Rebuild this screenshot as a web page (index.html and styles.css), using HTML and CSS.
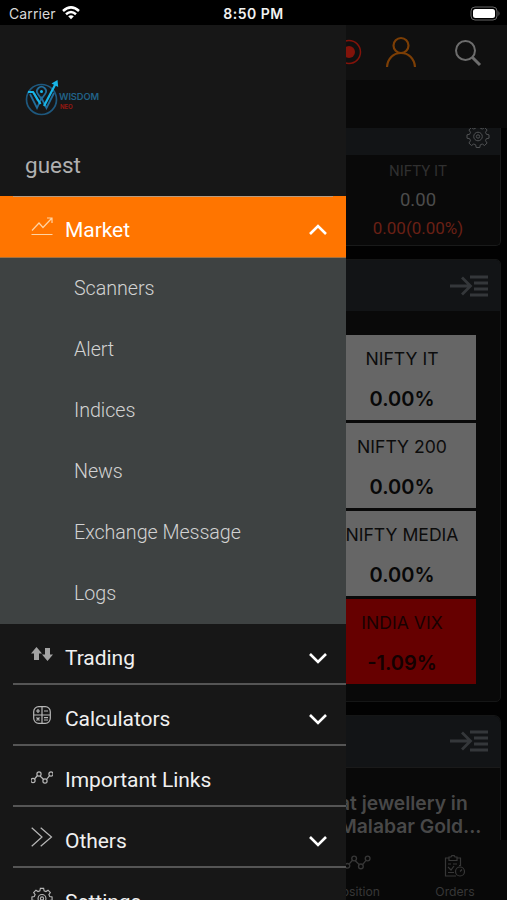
FILE: index.html
```html
<!DOCTYPE html>
<html lang="en">
<head>
<meta charset="utf-8">
<title>Wisdom Neo</title>
<link rel="stylesheet" href="styles.css">
</head>
<body>
<svg class="defs" width="0" height="0">
  <symbol id="gear" viewBox="0 0 24 24"><path d="M10.2 1.5h3.6l.5 2.7 2 .8 2.3-1.5 2.5 2.5-1.6 2.3.9 2 2.6.5v3.4l-2.7.5-.8 2 1.6 2.3-2.5 2.5-2.3-1.5-2 .8-.5 2.7h-3.6l-.5-2.7-2-.8L5.400 21.500 2.900 19l1.600-2.300-.8-2-2.700-.5v-3.400l2.600-.5.900-2L2.900 6l2.500-2.500L7.700 5l2-.8z"/><circle cx="12" cy="12.500" r="4.300"/><circle cx="12" cy="12.500" r="1.700"/></symbol>
  <symbol id="into" viewBox="0 0 40 22"><path d="M1 11h20M13 2.500l8.500 8.500-8.500 8.500M21 2h18M25 8h14M25 14h14M21 20h18"/></symbol>
  <symbol id="nodes" viewBox="0 0 24 14"><circle cx="3" cy="9.500" r="2.100"/><circle cx="9" cy="3" r="2.100"/><circle cx="15" cy="10" r="2.100"/><circle cx="21" cy="3" r="2.100"/><path d="M4.500 8l3-3.500M10 5l3.700 3.500M16.500 8.500L19.600 4.600"/></symbol>
  <symbol id="down" viewBox="0 0 20 12"><path d="M2 2l8 8 8-8"/></symbol>
</svg>
<div class="phone">
  <header class="status">
    <div class="carrier">Carrier
      <svg class="wifi" width="18" height="14" viewBox="0 0 18 14"><path d="M1 5Q9-2.200 17 5M4 8.200Q9 3.700 14 8.200"/><path class="dot" d="M6.200 10.300Q9 8.200 11.800 10.300L9 13.300z"/></svg>
    </div>
    <div class="time">8:50 PM</div>
    <svg class="battery" width="31" height="15" viewBox="0 0 31 15"><rect class="shell" x="1" y="1" width="26" height="13" rx="4"/><rect class="charge" x="3" y="3" width="22" height="9" rx="2.500"/><path class="cap" d="M28.500 5q2 2.500 0 5z"/></svg>
  </header>

  <main class="page">
    <div class="toolbar">
      <svg class="record" width="26" height="26" viewBox="0 0 26 26"><circle cx="13" cy="13" r="11.500"/><circle class="core" cx="13" cy="13" r="6"/></svg>
      <svg class="person" width="32" height="32" viewBox="0 0 32 32"><circle cx="16" cy="9.500" r="7.500"/><path d="M2 31c.7-8.500 6.500-14 14-14s13.300 5.500 14 14"/></svg>
      <svg class="search" width="28" height="28" viewBox="0 0 28 28"><circle cx="11.500" cy="11.500" r="9.500"/><path d="M18.500 18.500l7.500 7.500"/></svg>
    </div>
    <section class="ticker">
      <div class="ticker-bar"><svg class="gear" width="24" height="24"><use href="#gear"/></svg></div>
      <div class="quote"><span class="q-name">NIFTY IT</span><span class="q-price">0.00</span><span class="q-change">0.00(0.00%)</span></div>
    </section>
    <section class="card heat">
      <div class="card-head"><svg class="into" width="40" height="22"><use href="#into"/></svg></div>
      <div class="tiles">
        <div class="tile"><span>NIFTY IT</span><b>0.00%</b></div>
        <div class="tile"><span>NIFTY 200</span><b>0.00%</b></div>
        <div class="tile"><span>NIFTY MEDIA</span><b>0.00%</b></div>
        <div class="tile loss"><span>INDIA VIX</span><b>-1.09%</b></div>
      </div>
    </section>
    <section class="card news">
      <div class="card-head"><svg class="into" width="40" height="22"><use href="#into"/></svg></div>
      <div class="headline"><p>at jewellery in</p><p>Malabar Gold...</p></div>
    </section>
    <nav class="tabs">
      <div class="tab"><svg width="27" height="16"><use href="#nodes"/></svg><span>Position</span></div>
      <div class="tab"><svg width="22" height="23" viewBox="0 0 22 23"><path d="M5 3H1.500v18H12M13 3h3.500v8M5 2h2l.8-1.300h2.500L11 2h2v3.500H5zM4 9h3M9 9h4M4 12l3 3 3-4M4 17.500h6"/><circle cx="16" cy="16.500" r="4.500"/><path d="M16 16.500l2-2M15 10.500h2"/></svg><span>Orders</span></div>
    </nav>
  </main>

  <aside class="drawer">
    <div class="profile">
      <div class="brand">
        <svg width="34" height="37" viewBox="0 0 34 37"><circle class="ring" cx="16.500" cy="20.500" r="15"/><path class="w-dark" d="M5 15l7 14 4.500-10 5 10 7.500-15M9 14l4 8"/><path class="w-dark" d="M16.500 20l-3.600-5a4.500 4.500 0 1 1 7.200 0z"/><path class="w-light" d="M3 13h5l7.500 12M19 27L30.500 5"/><path class="tip" d="M26.500 4.500L32.500 1l.7 7z"/><circle class="tip" cx="16.500" cy="12.500" r="1.500"/></svg>
        <div class="brand-name"><span>WISDOM</span><em>NEO</em></div>
      </div>
      <div class="user">guest</div>
    </div>
    <div class="item active">
      <svg class="icon" width="22" height="20" viewBox="0 0 22 20"><path d="M.5 18.500h21M1 14.500L8 7l4 4.500 8.500-9M16 2h5v5"/></svg>
      <span>Market</span><svg class="chevron up" width="20" height="12"><use href="#down"/></svg>
    </div>
    <div class="submenu">
      <div>Scanners</div><div>Alert</div><div>Indices</div><div>News</div><div>Exchange Message</div><div>Logs</div>
    </div>
    <div class="item">
      <svg class="icon solid" width="22" height="20" viewBox="0 0 22 20"><path d="M5.500 3L0 9.500h3V16h5V9.500h3zM16.500 17L11 10.500h3V4h5v6.500h3z"/></svg>
      <span>Trading</span><svg class="chevron" width="20" height="12"><use href="#down"/></svg>
    </div>
    <div class="item">
      <svg class="icon" width="22" height="20" viewBox="0 0 22 20"><rect x="2.700" y="1.700" width="16.600" height="16.600" rx="5"/><path d="M11 2v16M3 10h16M5 6h4M7 4v4M13 6h4M5.500 12.500l3 3M8.500 12.500l-3 3M13 12.700h4M13 15h4"/></svg>
      <span>Calculators</span><svg class="chevron" width="20" height="12"><use href="#down"/></svg>
    </div>
    <div class="item">
      <svg class="icon" width="22" height="20" viewBox="1 -5 22 20"><use href="#nodes" width="24" height="14"/></svg>
      <span>Important Links</span>
    </div>
    <div class="item">
      <svg class="icon" width="22" height="20" viewBox="0 0 22 20"><path d="M.7.700L11 10 .7 19.300M9.700.700L20.500 10 9.700 19.300"/></svg>
      <span>Others</span><svg class="chevron" width="20" height="12"><use href="#down"/></svg>
    </div>
    <div class="item">
      <svg class="icon" width="22" height="22"><use href="#gear"/></svg>
      <span>Settings</span>
    </div>
  </aside>
</div>
</body>
</html>
```
FILE: styles.css
```css
* { box-sizing: border-box; }
body { margin: 0; background: #000; font-family: Roboto, "Liberation Sans", sans-serif; }
svg { display: block; flex: none; fill: none; stroke: currentColor; }
.defs { position: absolute; }
.phone { position: relative; width: 507px; height: 900px; overflow: hidden; background: #000; }

.status { height: 25px; display: grid; grid-template-columns: 1fr auto 1fr; align-items: center; padding: 2px 6px 0 9px; color: #f2f2f2; font: 14px Inter, sans-serif; }
.carrier { display: flex; align-items: center; gap: 6px; color: #d8d8d8; letter-spacing: .1px; }
.wifi { margin-top: -2px; stroke: #fff; stroke-width: 2.500; }
.wifi .dot { fill: #fff; stroke: none; }
.time { margin-left: -3px; font-weight: 600; letter-spacing: .5px; }
.battery { justify-self: end; margin-top: -1px; }
.shell { stroke: #666; stroke-width: 1; }
.charge { fill: #fff; stroke: none; }
.cap { fill: #666; stroke: none; }

.page { height: 875px; display: flex; flex-direction: column; background: #020202; }
.toolbar { height: 103px; flex: none; display: flex; justify-content: flex-end; align-items: flex-start; padding: 14px 25px 0 0; background: linear-gradient(#101010 55px, #090909 55px); }
.record { margin: 0 23px 0 0; color: #82130a; stroke-width: 1.500; }
.record .core { fill: #82130a; stroke: none; }
.person { margin: -3px 37px 0 0; color: #7c3e05; stroke-width: 2.200; }
.search { color: #6d6d6d; stroke-width: 2; }
.search path { stroke-width: 3; }

.ticker { width: 501px; height: 118px; flex: none; border: 1px solid #191a1a; border-top: 0; border-radius: 0 0 5px 5px; background: #090909; }
.ticker-bar { height: 27px; display: flex; justify-content: flex-end; padding-right: 10px; overflow: hidden; background: #121416; color: #505254; }
.ticker-bar .gear { margin-top: -4px; stroke-width: 1; }
.quote { width: 164px; margin-left: auto; display: flex; flex-direction: column; align-items: center; line-height: 28.500px; padding-top: 2px; color: #424242; }
.q-name { font-size: 15px; color: #303030; }
.q-price { font-size: 18.500px; color: #4c4c4c; }
.q-change { font-size: 17px; color: #692015; }

.card { width: 501px; flex: none; border: 1px solid #151616; border-radius: 5px; background: #090909; overflow: hidden; }
.heat { height: 443px; margin-top: 13px; }
.card-head { height: 51px; display: flex; align-items: center; justify-content: flex-end; padding-right: 11px; background: #121416; color: #34373a; }
.into { stroke-width: 2.800; }
.news .into { margin-top: -2px; }
.tiles { display: grid; grid-auto-rows: 85px; gap: 3px; width: 148px; margin: 24px 24px 0 auto; }
.tile { display: flex; flex-direction: column; align-items: center; background: #666; color: #0c0c0c; white-space: nowrap; padding-top: 8px; font-family: Inter, sans-serif; }
.tile span { font-size: 17.600px; line-height: 32px; }
.tile b { font-size: 20px; line-height: 48px; font-weight: 600; color: #080808; }
.tile.loss { background: #660000; color: #180202; }
.tile.loss b { color: #130101; }
.news { height: 125px; margin-top: 13px; border-bottom: 0; border-radius: 7px 7px 0 0; }
.headline { border-top: 1px solid #1a1a1a; padding: 24px 20px 0 0; margin-left: 338px; font: 600 19.300px/23px Inter, sans-serif; color: #484848; white-space: nowrap; }
.headline p { margin: 0; }
.tabs { flex: 1; display: flex; justify-content: flex-end; padding-right: 3px; background: #080808; color: #373737; font: 12.200px Inter, sans-serif; }
.tab { width: 98px; height: 61px; display: flex; flex-direction: column; align-items: center; justify-content: space-between; padding: 15px 0 2px; }
.tab svg { stroke-width: 1.200; }

.drawer { position: absolute; left: 0; top: 25px; width: 346px; height: 875px; overflow: hidden; background: #171717; }
.profile { height: 171px; padding: 54px 0 0 25px; color: #b0b0b0; }
.brand { display: flex; height: 37px; }
.ring { stroke: #1e587e; stroke-width: 1.700; }
.w-dark { stroke: #216d9c; stroke-width: 1.800; }
.w-light { stroke: #18b6e8; stroke-width: 2.200; }
.tip { fill: #18b6e8; stroke: none; }
.brand-name { display: flex; flex-direction: column; padding-top: 12px; font: 600 9.300px/12px Inter, sans-serif; color: #216287; letter-spacing: -.1px; }
.brand-name em { padding-left: 1px; font: 700 6px/8px Inter, sans-serif; color: #941711; }
.user { margin-top: 35px; font-size: 22.500px; line-height: 28px; }
.item { height: 61px; display: flex; align-items: center; padding: 7px 18px 0 31px; color: #f0f0f0; font-size: 21px; background: linear-gradient(#555, #555) 13px 100% / 333px 2px no-repeat; }
.item span { letter-spacing: -.05px; }
.item .icon { margin: -8px 12px 0 0; color: #b7b7b7; stroke-width: 1.200; }
.item .icon.solid { fill: #a3a3a3; stroke: none; }
.item .chevron { margin-left: auto; color: #fff; stroke-width: 2.600; }
.item.active { height: 62px; background: linear-gradient(#b99b7e, #b99b7e) 13px 0 / 320px 1px no-repeat, #ff7500; border-bottom: 1px solid #a2713f; color: #fff; }
.active .icon { color: #ffd3a3; }
.chevron.up { transform: rotate(180deg); }
.submenu { height: 366px; background: #3e4242; color: #d2d2d2; font-size: 19.700px; font-weight: 300; letter-spacing: -.05px; }
.submenu div { height: 61px; padding-left: 74px; line-height: 62px; }
```
